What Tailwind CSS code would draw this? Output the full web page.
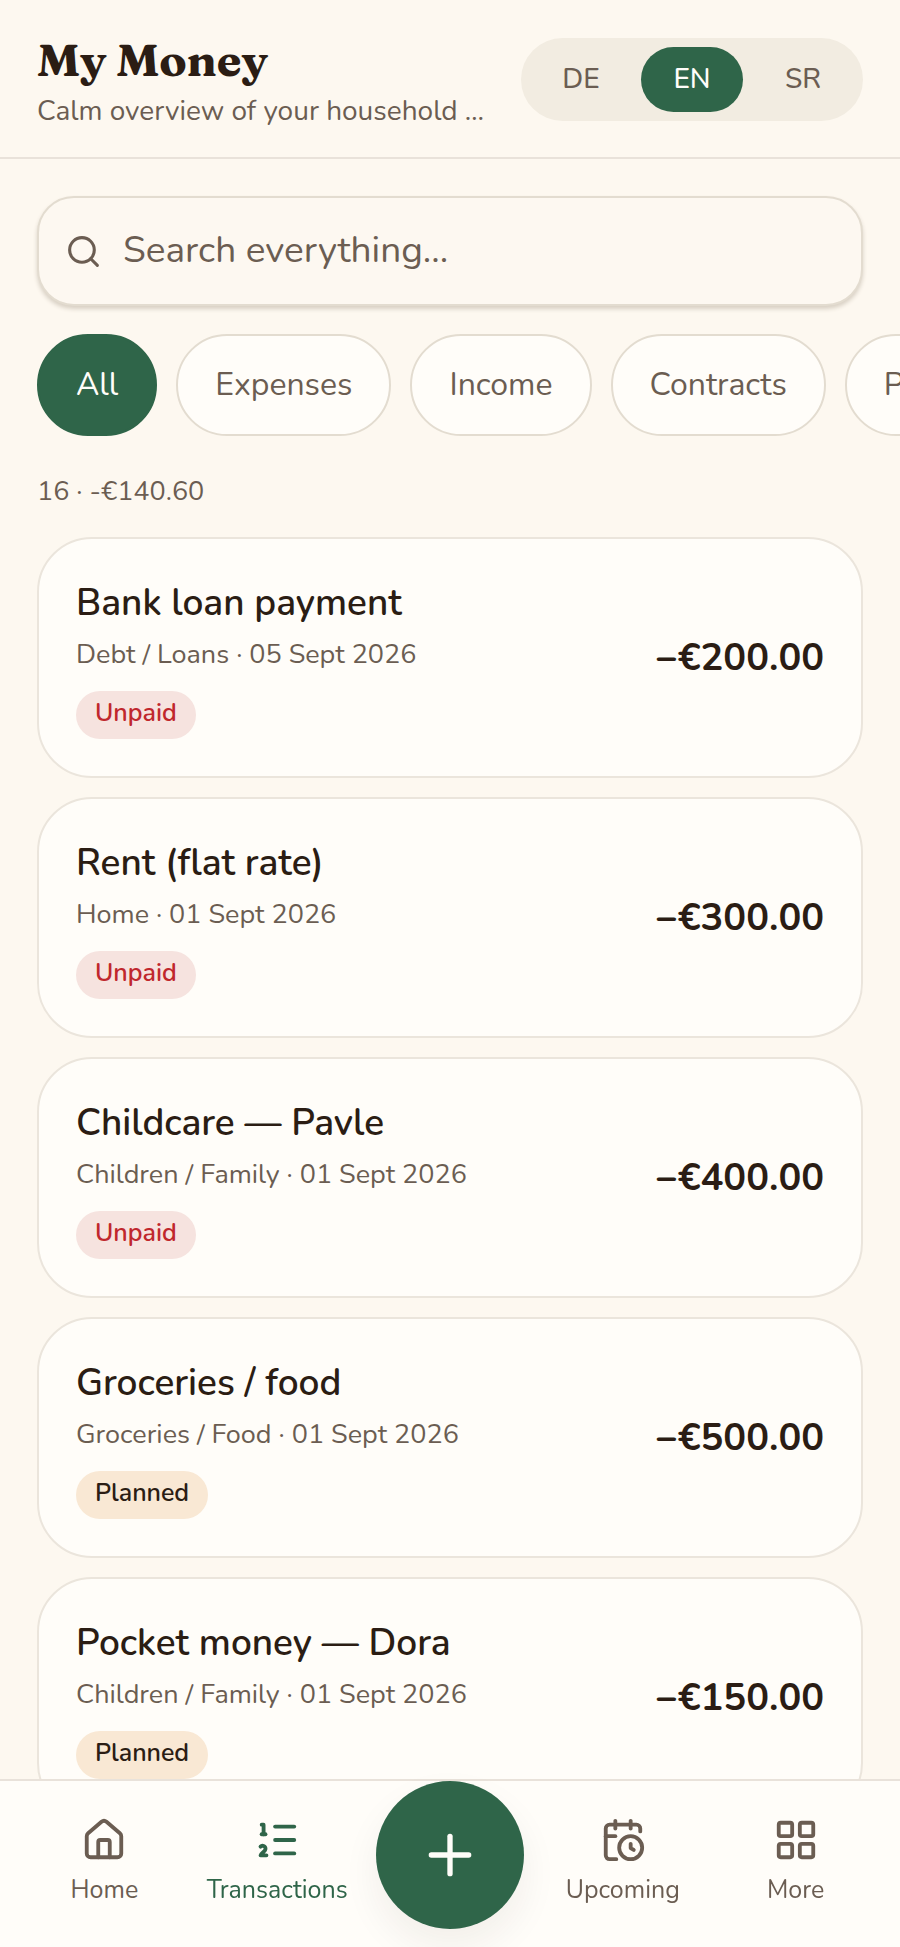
<!DOCTYPE html>
<html lang="en">
<head>
    <meta charset="UTF-8">
    <meta name="viewport" content="width=device-width, initial-scale=1.0">
    <title>My Money</title>
    <script src="https://cdn.jsdelivr.net/npm/@tailwindcss/browser@4"></script>
</head>
<body class="bg-[#fdf8f0] text-[#2b1d14] font-['Nunito','Lato',sans-serif]">
    <div class="h-screen flex flex-col overflow-hidden">

        <header class="shrink-0 flex items-center justify-between gap-9 px-[37px] pt-7 pb-[27px] border-b-2 border-[#e9e2da]">
            <div class="min-w-0 flex-1">
                <h1 class="font-['Fraunces','Liberation_Serif',serif] font-bold text-[45px] leading-[64px]">My Money</h1>
                <p class="truncate text-[28px] leading-[38px] text-[#6b5d52]">Calm overview of your household finances</p>
            </div>
            <div class="shrink-0 flex gap-[9px] p-[9px] rounded-full bg-[#f2ece1] text-[28px] font-medium text-[#6b5d52]">
                <button class="h-[65px] w-[102px] rounded-full">DE</button>
                <button class="h-[65px] w-[102px] rounded-full bg-[#2f6549] text-[#fffdf9]">EN</button>
                <button class="h-[65px] w-[102px] rounded-full">SR</button>
            </div>
        </header>

        <main class="flex-1 min-h-0 overflow-hidden px-[37px] pt-[37px]">
            <label for="search" class="flex items-center gap-[21px] h-[110px] px-[26px] rounded-[37px] border-2 border-[#e3dcd0] shadow-[0_3px_4px_#d8d0c4] bg-[#fdf8f1]">
                <svg class="size-[37px] shrink-0 text-[#6b5d52]" viewBox="0 0 24 24" fill="none" stroke="currentColor" stroke-width="2" stroke-linecap="round" stroke-linejoin="round"><circle cx="11" cy="11" r="8"/><path d="m21 21-4.3-4.3"/></svg>
                <input id="search" type="search" aria-label="Search everything" placeholder="Search everything..." class="flex-1 min-w-0 text-[37px] outline-none placeholder:text-[#6b5d52]">
            </label>

            <div class="flex gap-[19px] mt-7 -mr-[37px] overflow-hidden text-[32px] text-[#6b5d52]">
                <button class="shrink-0 h-[102px] px-[37px] rounded-full border-2 border-[#2f6549] bg-[#2f6549] text-[#fffdf9]">All</button>
                <button class="shrink-0 h-[102px] px-[37px] rounded-full border-2 border-[#e3dcd0] bg-[#fffdf9]">Expenses</button>
                <button class="shrink-0 h-[102px] px-[37px] rounded-full border-2 border-[#e3dcd0] bg-[#fffdf9]">Income</button>
                <button class="shrink-0 h-[102px] px-[37px] rounded-full border-2 border-[#e3dcd0] bg-[#fffdf9]">Contracts</button>
                <button class="shrink-0 h-[102px] px-[37px] rounded-full border-2 border-[#e3dcd0] bg-[#fffdf9]">Payments</button>
            </div>

            <p class="mt-[37px] text-[27px] leading-[37px] text-[#6b5d52]">16 · -€140.60</p>

            <ul id="list" class="mt-[27px] flex flex-col gap-[19px]"></ul>
        </main>
    </div>

    <nav class="fixed inset-x-0 bottom-0 grid grid-cols-5 h-[168px] px-[18px] border-t-2 border-[#e9e2da] bg-[#fffdf9] text-[25px] leading-[37px] text-[#6b5d52]">
        <a href="#home" class="flex flex-col items-center pt-9 gap-[9px]">
            <svg class="size-[46px]" viewBox="0 0 24 24" fill="none" stroke="currentColor" stroke-width="2" stroke-linecap="round" stroke-linejoin="round"><path d="M15 21v-8a1 1 0 0 0-1-1h-4a1 1 0 0 0-1 1v8"/><path d="M3 10a2 2 0 0 1 .709-1.528l7-5.999a2 2 0 0 1 2.582 0l7 5.999A2 2 0 0 1 21 10v9a2 2 0 0 1-2 2H5a2 2 0 0 1-2-2z"/></svg>
            Home
        </a>
        <a href="#transactions" class="flex flex-col items-center pt-9 gap-[9px] text-[#2f6549]">
            <svg class="size-[46px]" viewBox="0 0 24 24" fill="none" stroke="currentColor" stroke-width="2" stroke-linecap="round" stroke-linejoin="round"><path d="M11 5h10"/><path d="M11 12h10"/><path d="M11 19h10"/><path d="M4 4h1v5"/><path d="M4 9h2"/><path d="M6.5 20H3.4c0-1 2.6-1.925 2.6-3.5a1.5 1.5 0 0 0-2.6-1.02"/></svg>
            Transactions
        </a>
        <div class="flex justify-center">
            <button aria-label="Add" class="size-[148px] shrink-0 rounded-full bg-[#2f6549] text-[#fffdf9] flex items-center justify-center shadow-[0_18px_37px_#2b1d1410]">
                <svg class="size-[64px]" viewBox="0 0 24 24" fill="none" stroke="currentColor" stroke-width="2" stroke-linecap="round"><path d="M5 12h14"/><path d="M12 5v14"/></svg>
            </button>
        </div>
        <a href="#upcoming" class="flex flex-col items-center pt-9 gap-[9px]">
            <svg class="size-[46px]" viewBox="0 0 24 24" fill="none" stroke="currentColor" stroke-width="2" stroke-linecap="round" stroke-linejoin="round"><path d="M16 14v2.2l1.6 1"/><path d="M16 2v4"/><path d="M21 7.5V6a2 2 0 0 0-2-2H5a2 2 0 0 0-2 2v14a2 2 0 0 0 2 2h3.5"/><path d="M3 10h5"/><path d="M8 2v4"/><circle cx="16" cy="16" r="6"/></svg>
            Upcoming
        </a>
        <a href="#more" class="flex flex-col items-center pt-9 gap-[9px]">
            <svg class="size-[46px]" viewBox="0 0 24 24" fill="none" stroke="currentColor" stroke-width="2" stroke-linecap="round" stroke-linejoin="round"><rect width="7" height="7" x="3" y="3" rx="1"/><rect width="7" height="7" x="14" y="3" rx="1"/><rect width="7" height="7" x="14" y="14" rx="1"/><rect width="7" height="7" x="3" y="14" rx="1"/></svg>
            More
        </a>
    </nav>

    <script>
        const transactions = [
            { title: "Bank loan payment", info: "Debt / Loans · 05 Sept 2026", status: "Unpaid", amount: "−€200.00" },
            { title: "Rent (flat rate)", info: "Home · 01 Sept 2026", status: "Unpaid", amount: "−€300.00" },
            { title: "Childcare — Pavle", info: "Children / Family · 01 Sept 2026", status: "Unpaid", amount: "−€400.00" },
            { title: "Groceries / food", info: "Groceries / Food · 01 Sept 2026", status: "Planned", amount: "−€500.00" },
            { title: "Pocket money — Dora", info: "Children / Family · 01 Sept 2026", status: "Planned", amount: "−€150.00" },
        ];

        const badge = {
            Unpaid: "bg-[#f6e3df] text-[#c0272d]",
            Planned: "bg-[#f9e8d4] text-[#2b1d14]",
        };

        const list = document.getElementById("list");
        transactions.forEach((t) => {
            const row = document.createElement("li");
            row.className = "flex items-center justify-between p-[37px] rounded-[55px] border-2 border-[#ebe5dc] bg-[#fffdf9]";
            row.innerHTML = `
                <div>
                    <h2 class="text-[37px] leading-[55px] font-semibold">${t.title}</h2>
                    <p class="text-[27px] leading-[48px] text-[#6b5d52]">${t.info}</p>
                    <span class="mt-3 flex w-fit h-12 px-[19px] rounded-full text-[25px] leading-[44px] font-semibold ${badge[t.status]}">${t.status}</span>
                </div>
                <div class="text-[38px] leading-[52px] font-bold">${t.amount}</div>
            `;
            list.appendChild(row);
        });
    </script>
</body>
</html>
